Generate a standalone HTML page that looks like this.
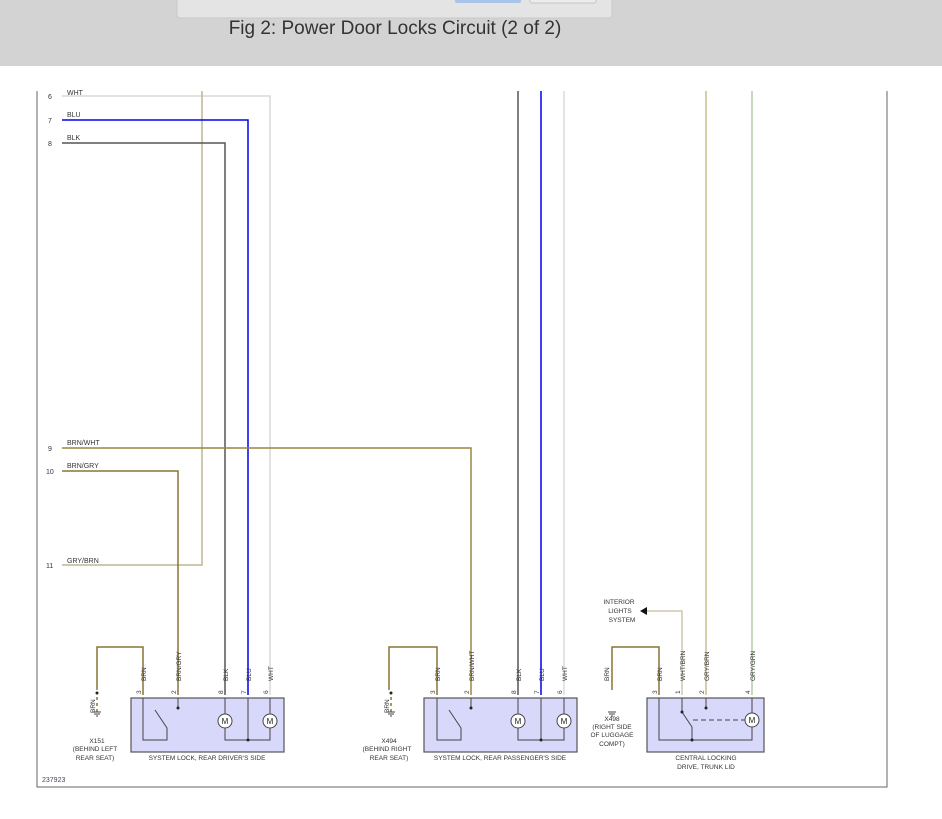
<!DOCTYPE html>
<html><head><meta charset="utf-8"><style>
body{margin:0;width:942px;height:814px;overflow:hidden;background:#fff;font-family:"Liberation Sans",sans-serif}
</style></head><body>
<svg width="942" height="814" xmlns="http://www.w3.org/2000/svg" font-family="Liberation Sans, sans-serif">
<rect x="0" y="0" width="942" height="66" fill="#d3d3d3"/>
<rect x="177" y="-4" width="435" height="22" rx="3" fill="#e4e4e4" stroke="#c8c8c8"/>
<rect x="455" y="-4" width="66" height="7" rx="2" fill="#a9c4e8"/>
<rect x="530" y="-4" width="66" height="7" rx="2" fill="#ececec" stroke="#c4c4c4"/>
<text x="395" y="34" font-size="19" fill="#333" text-anchor="middle">Fig 2: Power Door Locks Circuit (2 of 2)</text>
<g fill="none" stroke-width="1.5">
<path d="M37 91V787H887V91" stroke="#666" stroke-width="1"/>
<path d="M62 96H270V695" stroke="#d8d8d8"/>
<path d="M62 565H202V91" stroke="#beb794"/>
<path d="M62 120H248V695" stroke="#0000ee"/>
<path d="M62 143H225V695" stroke="#555"/>
<path d="M62 448H471V695" stroke="#9a8540"/>
<path d="M62 471H178V695" stroke="#8a7535"/>
<path d="M518 91V695" stroke="#555"/>
<path d="M541 91V695" stroke="#0000ee"/>
<path d="M564 91V695" stroke="#dcdcdc"/>
<path d="M706 91V695" stroke="#c9bd8f"/>
<path d="M752 91V695" stroke="#b5cca8"/>
<path d="M645 611H682V695" stroke="#cfc8b0"/>
<path d="M143 695V647H97V690" stroke="#8a7535"/>
<path d="M437 695V647H389V690" stroke="#8a7535"/>
<path d="M659 695V647H612V690" stroke="#8a7535"/>
<path d="M97 697V712M391 697V712" stroke="#8a7535" stroke-dasharray="3,3"/>
</g>
<polygon points="640,611 647,607 647,615" fill="#111"/>
<g stroke="#555" fill="#d8d8fb" stroke-width="1.2">
<rect x="131" y="698" width="153" height="54"/>
<rect x="424" y="698" width="153" height="54"/>
<rect x="647" y="698" width="117" height="54"/>
</g>
<g stroke="#444" fill="none" stroke-width="1">
<path d="M143 698V740H167V728L155 710"/><path d="M178 698V708"/>
<path d="M225 698V740H270V698M248 698V740"/>
<path d="M437 698V740H461V728L449 710"/><path d="M471 698V708"/>
<path d="M518 698V740H564V698M541 698V740"/>
<path d="M659 698V740H752V727M752 698V713M682 698V712L692 727V740M706 698V708"/>
<path d="M693 720H745" stroke-dasharray="5,3"/>
</g>
<g fill="#fff" stroke="#444" stroke-width="1">
<circle cx="225" cy="721" r="7"/><circle cx="270" cy="721" r="7"/>
<circle cx="518" cy="721" r="7"/><circle cx="564" cy="721" r="7"/>
<circle cx="752" cy="720" r="7"/>
</g>
<g font-size="8" fill="#222" text-anchor="middle">
<text x="225" y="724">M</text><text x="270" y="724">M</text>
<text x="518" y="724">M</text><text x="564" y="724">M</text><text x="752" y="723">M</text>
</g>
<g fill="#222"><circle cx="97" cy="693" r="1.5"/><circle cx="391" cy="693" r="1.5"/><circle cx="248" cy="740" r="1.5"/><circle cx="541" cy="740" r="1.5"/><circle cx="692" cy="740" r="1.5"/><circle cx="178" cy="708" r="1.5"/><circle cx="471" cy="708" r="1.5"/><circle cx="706" cy="708" r="1.5"/><circle cx="682" cy="712" r="1.5"/></g>
<g stroke="#444" stroke-width="1"><path d="M93 712H101M94 714H100M96 716H98M387 712H395M388 714H394M390 716H392M608 712H616M609 714H615M611 716H613"/></g>
<g font-size="7" fill="#333">
<text x="48" y="99">6</text><text x="48" y="123">7</text><text x="48" y="146">8</text>
<text x="48" y="451">9</text><text x="46" y="474">10</text><text x="46" y="568">11</text>
<text x="67" y="95">WHT</text><text x="67" y="117">BLU</text><text x="67" y="140">BLK</text>
<text x="67" y="445">BRN/WHT</text><text x="67" y="468">BRN/GRY</text><text x="67" y="563">GRY/BRN</text>
<text x="42" y="782" fill="#446">237923</text>
</g>
<g font-size="6.5" fill="#333" text-anchor="middle">
<text x="97" y="743">X151</text><text x="95" y="751">(BEHIND LEFT</text><text x="95" y="760">REAR SEAT)</text>
<text x="389" y="743">X494</text><text x="387" y="751">(BEHIND RIGHT</text><text x="389" y="760">REAR SEAT)</text>
<text x="612" y="721">X498</text><text x="612" y="729">(RIGHT SIDE</text><text x="612" y="737">OF LUGGAGE</text><text x="612" y="746">COMPT)</text>
<text x="207" y="760">SYSTEM LOCK, REAR DRIVER'S SIDE</text>
<text x="500" y="760">SYSTEM LOCK, REAR PASSENGER'S SIDE</text>
<text x="706" y="760">CENTRAL LOCKING</text><text x="706" y="769">DRIVE, TRUNK LID</text>
<text x="619" y="604">INTERIOR</text><text x="620" y="613">LIGHTS</text><text x="622" y="622">SYSTEM</text>
</g>
<g font-size="6.5" fill="#333">
<text transform="translate(146,681) rotate(-90)">BRN</text>
<text transform="translate(181,681) rotate(-90)">BRN/GRY</text>
<text transform="translate(228,681) rotate(-90)">BLK</text>
<text transform="translate(251,681) rotate(-90)">BLU</text>
<text transform="translate(273,681) rotate(-90)">WHT</text>
<text transform="translate(440,681) rotate(-90)">BRN</text>
<text transform="translate(474,681) rotate(-90)">BRN/WHT</text>
<text transform="translate(521,681) rotate(-90)">BLK</text>
<text transform="translate(544,681) rotate(-90)">BLU</text>
<text transform="translate(567,681) rotate(-90)">WHT</text>
<text transform="translate(662,681) rotate(-90)">BRN</text>
<text transform="translate(609,681) rotate(-90)">BRN</text>
<text transform="translate(685,681) rotate(-90)">WHT/BRN</text>
<text transform="translate(709,681) rotate(-90)">GRY/BRN</text>
<text transform="translate(755,681) rotate(-90)">GRY/GRN</text>
<text transform="translate(95,713) rotate(-90)">BRN</text>
<text transform="translate(389,713) rotate(-90)">BRN</text>
<text transform="translate(141,694) rotate(-90)">3</text><text transform="translate(176,694) rotate(-90)">2</text>
<text transform="translate(223,694) rotate(-90)">8</text><text transform="translate(246,694) rotate(-90)">7</text><text transform="translate(268,694) rotate(-90)">6</text>
<text transform="translate(435,694) rotate(-90)">3</text><text transform="translate(469,694) rotate(-90)">2</text>
<text transform="translate(516,694) rotate(-90)">8</text><text transform="translate(539,694) rotate(-90)">7</text><text transform="translate(562,694) rotate(-90)">6</text>
<text transform="translate(657,694) rotate(-90)">3</text><text transform="translate(680,694) rotate(-90)">1</text>
<text transform="translate(704,694) rotate(-90)">2</text><text transform="translate(750,694) rotate(-90)">4</text>
</g>
</svg>
</body></html>
